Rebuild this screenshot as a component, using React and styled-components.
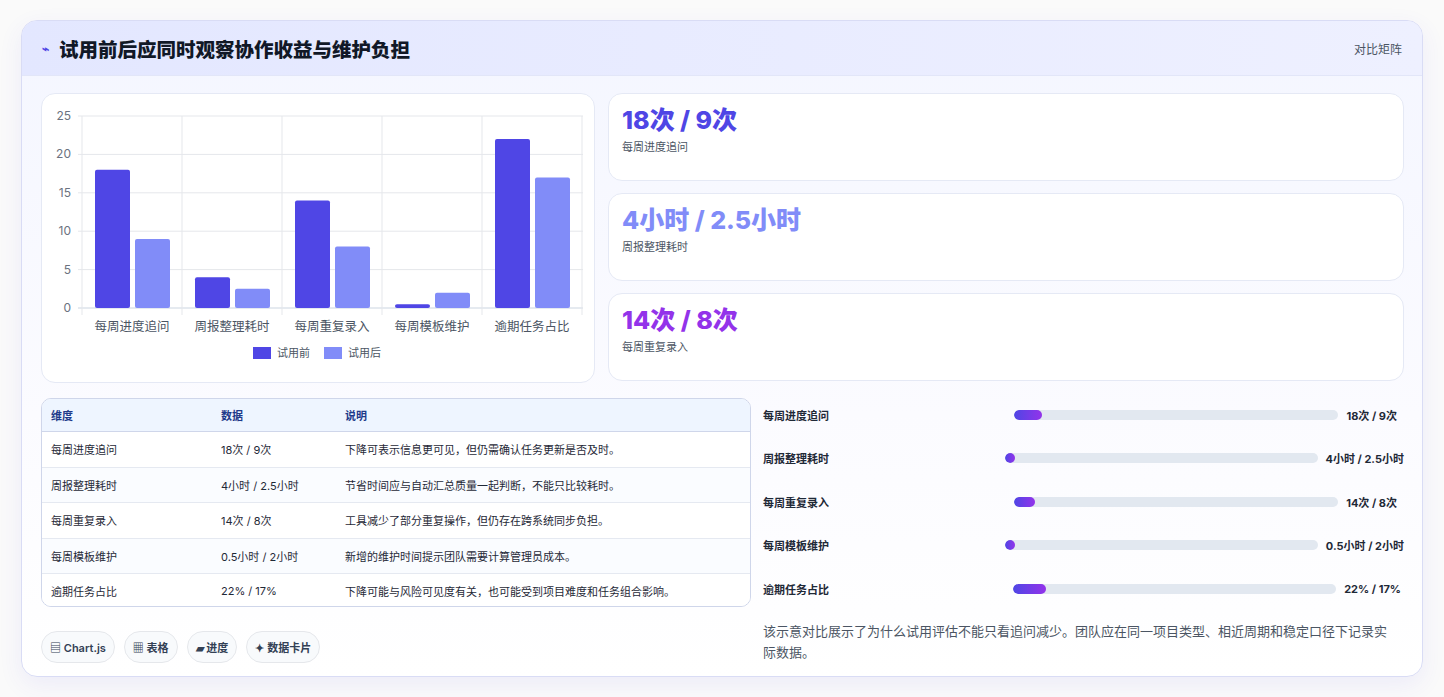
import React from "react";
import styled, { createGlobalStyle } from "styled-components";

const G = createGlobalStyle`
  body{margin:0;background:#f3f4f6;font-family:"Inter","Noto Sans CJK SC",sans-serif;color:#1f2937;}
`;
const Page = styled.div`padding:20px 21px;height:697px;box-sizing:border-box;background:#fafafa;`;
const Card = styled.div`border:1px solid #d9dcf5;border-radius:16px;background:linear-gradient(180deg,#f4f6ff,#fbfbff 60%,#fff);overflow:hidden;box-shadow:0 8px 24px rgba(79,70,229,.08);height:657px;box-sizing:border-box;`;
const Header = styled.div`height:54px;display:flex;align-items:center;justify-content:space-between;padding:0 20px;background:linear-gradient(90deg,#e3e7ff,#eef0ff);border-bottom:1px solid #e2e6f8;`;
const Title = styled.h1`margin:0;font-size:19.5px;font-weight:800;color:#111827;display:flex;align-items:center;gap:10px;`;
const Tag = styled.span`font-size:12px;color:#4b5563;`;
const Body = styled.div`padding:17px 18px 0 19px;display:flex;flex-direction:column;gap:15px;`;
const TopRow = styled.div`display:grid;grid-template-columns:554px 1fr;gap:13px;`;
const BottomRow = styled.div`display:grid;grid-template-columns:710px 1fr;gap:12px;`;
const Panel = styled.div`background:#fff;border:1px solid #e5e9f5;border-radius:14px;`;
const Stats = styled.div`display:flex;flex-direction:column;gap:12px;`;
const Stat = styled(Panel)`height:88px;box-sizing:border-box;padding:10px 13px;`;
const Num = styled.div`font-size:25px;font-weight:800;color:${p=>p.c};line-height:32px;`;
const Sub = styled.div`font-size:11px;color:#4b5563;margin-top:2px;`;
const Table = styled.table`width:100%;border-collapse:collapse;font-size:11px;`;
const TWrap = styled(Panel)`border-color:#cfd6ea;overflow:hidden;border-radius:10px;height:209px;box-sizing:border-box;`;
const Th = styled.th`text-align:left;font-weight:600;color:#1e3a8a;background:#eef5ff;padding:0 9px;height:32px;border-bottom:1px solid #cfd6ea;`;
const Td = styled.td`padding:0 9px;height:34.5px;color:#1f2937;border-bottom:${p=>p.last?"none":"1px solid #e5e9f1"};background:${p=>p.alt?"#fafcff":"#fff"};`;
const Left = styled.div`display:flex;flex-direction:column;`;
const Chips = styled.div`display:flex;gap:9px;margin-top:24px;`;
const Chip = styled.span`font-size:11px;font-weight:600;color:#334155;border:1px solid #e5e7eb;background:#f8fafc;border-radius:999px;padding:7px 8px;`;
const Bars = styled.div`display:flex;flex-direction:column;margin-top:-5px;`;
const BarRow = styled.div`display:flex;align-items:center;gap:8px;height:43.5px;font-size:11px;`;
const BLabel = styled.div`flex:3;font-weight:600;color:#1f2937;`;
const Track = styled.div`flex:4;height:10px;border-radius:5px;background:#e2e8f0;overflow:hidden;`;
const Fill = styled.div`height:100%;border-radius:5px;background:linear-gradient(90deg,#4f46e5,#9333ea);min-width:10px;`;
const BVal = styled.div`font-weight:700;color:#1f2937;padding-right:${p=>p.pr}px;`;
const Note = styled.p`font-size:13px;color:#4b5563;line-height:21px;margin:10px 0 0;padding-right:10px;`;

const cats=["每周进度追问","周报整理耗时","每周重复录入","每周模板维护","逾期任务占比"];
const before=[18,4,14,0.5,22], after=[9,2.5,8,2,17];

function Chart(){
  const y=v=>307-v*7.68;
  return <svg width="553" height="288" viewBox="40 93 553 288" style={{display:"block"}}>
    {[0,5,10,15,20,25].map(v=><g key={v}><line x1="76" x2="581" y1={y(v)} y2={y(v)} stroke={v===0?"#cbd5e1":"#e5e7eb"}/><text x="69" y={y(v)+4} fontSize="12" fill="#6b7280" textAnchor="end" fontFamily="Inter">{v}</text></g>)}
    {[80,180,280,380,480,580].map(x=><line key={x} x1={x} x2={x} y1="115" y2="314" stroke="#e5e7eb"/>)}
    {cats.map((c,i)=><g key={c}>
      <rect x={93+i*100} y={y(before[i])} width="35" height={before[i]*7.68} rx="2" fill="#4f46e5"/>
      <rect x={133+i*100} y={y(after[i])} width="35" height={after[i]*7.68} rx="2" fill="#818cf8"/>
      <text x={130+i*100} y="330" fontSize="12.5" fill="#4b5563" textAnchor="middle" fontFamily="Noto Sans CJK SC">{c}</text>
    </g>)}
    <rect x="251" y="346" width="18" height="12" fill="#4f46e5"/>
    <text x="275" y="356" fontSize="11" fill="#4b5563" fontFamily="Noto Sans CJK SC">试用前</text>
    <rect x="322" y="346" width="18" height="12" fill="#818cf8"/>
    <text x="346" y="356" fontSize="11" fill="#4b5563" fontFamily="Noto Sans CJK SC">试用后</text>
  </svg>;
}

const rows=[["每周进度追问","18次 / 9次","下降可表示信息更可见，但仍需确认任务更新是否及时。"],["周报整理耗时","4小时 / 2.5小时","节省时间应与自动汇总质量一起判断，不能只比较耗时。"],["每周重复录入","14次 / 8次","工具减少了部分重复操作，但仍存在跨系统同步负担。"],["每周模板维护","0.5小时 / 2小时","新增的维护时间提示团队需要计算管理员成本。"],["逾期任务占比","22% / 17%","下降可能与风险可见度有关，也可能受到项目难度和任务组合影响。"]];
const fills=[8.5,3,6.6,3,10.3], prs=[7,0,7,0,3];

export default function App(){
  return <><G/><Page><Card>
    <Header><Title><span style={{color:"#4f46e5",fontSize:12}}>⌁</span>试用前后应同时观察协作收益与维护负担</Title><Tag>对比矩阵</Tag></Header>
    <Body>
      <TopRow>
        <Panel><Chart/></Panel>
        <Stats>
          <Stat><Num c="#4f46e5">18次 / 9次</Num><Sub>每周进度追问</Sub></Stat>
          <Stat><Num c="#818cf8">4小时 / 2.5小时</Num><Sub>周报整理耗时</Sub></Stat>
          <Stat><Num c="#9333ea">14次 / 8次</Num><Sub>每周重复录入</Sub></Stat>
        </Stats>
      </TopRow>
      <BottomRow>
        <Left>
          <TWrap><Table><thead><tr><Th style={{width:152}}>维度</Th><Th style={{width:106}}>数据</Th><Th>说明</Th></tr></thead>
            <tbody>{rows.map((r,i)=><tr key={i}>{r.map((c,j)=><Td key={j} alt={i%2===1} last={i===4}>{c}</Td>)}</tr>)}</tbody></Table></TWrap>
          <Chips><Chip>▤ Chart.js</Chip><Chip>▦ 表格</Chip><Chip>▰ 进度</Chip><Chip>✦ 数据卡片</Chip></Chips>
        </Left>
        <Bars>
          {rows.map((r,i)=><BarRow key={i}><BLabel>{r[0]}</BLabel><Track><Fill style={{width:fills[i]+"%"}}/></Track><BVal pr={prs[i]}>{r[1]}</BVal></BarRow>)}
          <Note>该示意对比展示了为什么试用评估不能只看追问减少。团队应在同一项目类型、相近周期和稳定口径下记录实际数据。</Note>
        </Bars>
      </BottomRow>
    </Body>
  </Card></Page></>;
}
